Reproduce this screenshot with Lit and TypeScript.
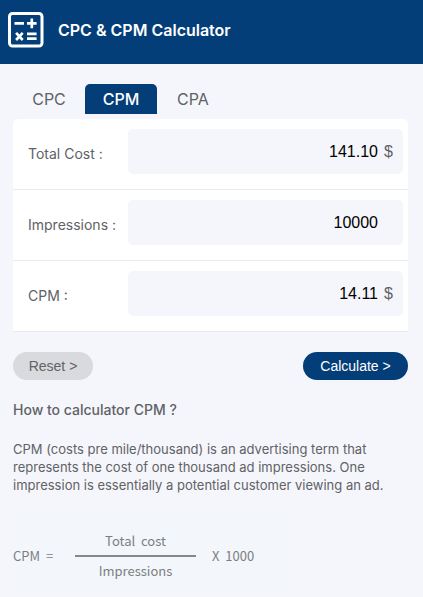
import { LitElement, html, css } from "lit";
import { customElement, state } from "lit/decorators.js";

interface Field {
  id: string;
  label: string;
  value: string;
  unit: string;
}

@customElement("app-root")
export class AppRoot extends LitElement {
  @state() private active = "CPM";

  @state() private fields: Field[] = [
    { id: "cost", label: "Total Cost :", value: "141.10", unit: "$" },
    { id: "impressions", label: "Impressions :", value: "10000", unit: "" },
    { id: "cpm", label: "CPM :", value: "14.11", unit: "$" },
  ];

  static styles = css`
    :host {
      display: block;
      min-height: 100vh;
      background: #f5f6fb;
      color: #606266;
      font-family: Inter, "Liberation Sans", sans-serif;
      font-size: 14px;
    }
    * {
      box-sizing: border-box;
    }
    header {
      display: flex;
      align-items: center;
      gap: 14px;
      height: 64px;
      padding: 0 8px 4px;
      background: #043e78;
      color: #fff;
    }
    .logo {
      width: 36px;
      height: 36px;
    }
    h1 {
      margin: 0;
      font-size: 16px;
      font-weight: 600;
      line-height: 24px;
    }
    main {
      padding: 20px 15px 0 13px;
    }
    .tabs {
      display: flex;
      margin-bottom: 5px;
    }
    .tab {
      width: 72px;
      height: 30px;
      padding: 0;
      border: 0;
      border-radius: 5px 5px 0 0;
      background: none;
      color: inherit;
      font: inherit;
      font-size: 16px;
    }
    .tab.active {
      background: #043e78;
      color: #fff;
      font-weight: 500;
    }
    .card {
      background: #fff;
      border-radius: 5px 5px 0 0;
    }
    .row {
      display: flex;
      align-items: flex-start;
      padding: 10px 5px 10px 15px;
      border-bottom: 1px solid #ebebed;
    }
    .row label {
      flex: none;
      width: 100px;
      line-height: 50px;
    }
    .field {
      display: flex;
      flex: 1;
      min-width: 0;
      height: 45px;
      border-radius: 5px;
      background: #f5f6fb;
    }
    .field input {
      flex: 1;
      min-width: 0;
      padding: 0;
      border: 0;
      outline: 0;
      background: none;
      color: #000;
      font: 16px "Liberation Sans", Arial, sans-serif;
      text-align: right;
    }
    .unit {
      flex: none;
      width: 25px;
      padding-left: 6px;
      font: 16px/45px "Liberation Sans", Arial, sans-serif;
    }
    .actions {
      display: flex;
      justify-content: space-between;
      margin-top: 20px;
    }
    .action {
      height: 28px;
      padding: 0;
      border: 0;
      border-radius: 14px;
      font: 14px "Liberation Sans", Arial, sans-serif;
    }
    .reset {
      width: 80px;
      background: #d9dadd;
      color: #606266;
    }
    .calculate {
      width: 105px;
      background: #043e78;
      color: #fff;
    }
    h2 {
      margin: 20px 0;
      font-size: 14px;
      font-weight: 500;
      line-height: 20px;
    }
    p {
      margin: 0;
      font-size: 13px;
      line-height: 18px;
    }
    .formula {
      display: flex;
      align-items: center;
      width: 268px;
      height: 73px;
      margin-top: 25px;
      background: #f3f6fa;
      color: #7c7e82;
      font: 13px/20px "Noto Sans CJK SC", sans-serif;
      white-space: pre;
    }
    .equals {
      width: 62px;
    }
    .fraction {
      width: 121px;
      margin-right: 16px;
      text-align: center;
    }
    .top {
      padding-bottom: 4px;
      border-bottom: 2px solid #85878a;
    }
    .bottom {
      padding-top: 4px;
    }
  `;

  private setValue(id: string, value: string) {
    this.fields = this.fields.map((f) => (f.id === id ? { ...f, value } : f));
  }

  private reset() {
    this.fields = this.fields.map((f) => ({ ...f, value: "" }));
  }

  private calculate() {
    const [cost, impressions] = this.fields.map((f) => Number(f.value));
    if (impressions > 0) {
      this.setValue("cpm", ((cost / impressions) * 1000).toFixed(2));
    }
  }

  render() {
    return html`
      <header>
        <svg class="logo" viewBox="0 0 36 36" fill="none" stroke="#fff" aria-hidden="true">
          <rect x="1.5" y="1.5" width="32.5" height="32.5" rx="3" stroke-width="3" />
          <path
            d="M6.5 11.3H16M19 11.3h9.6M23.8 6.4v9.8M19 21.8h9.6M19 26.6h9.6M8.1 20.8l6.6 7.2M14.7 20.8l-6.6 7.2"
            stroke-width="2.7"
          />
        </svg>
        <h1>CPC &amp; CPM Calculator</h1>
      </header>
      <main>
        <nav class="tabs">
          ${["CPC", "CPM", "CPA"].map(
            (name) => html`<button
              type="button"
              class="tab ${name === this.active ? "active" : ""}"
              @click=${() => (this.active = name)}
            >
              ${name}
            </button>`
          )}
        </nav>
        <div class="card">
          ${this.fields.map(
            (f) => html`<div class="row">
              <label for=${f.id}>${f.label}</label>
              <div class="field">
                <input
                  id=${f.id}
                  type="text"
                  inputmode="decimal"
                  .value=${f.value}
                  @input=${(e: Event) => this.setValue(f.id, (e.target as HTMLInputElement).value)}
                />
                <span class="unit">${f.unit}</span>
              </div>
            </div>`
          )}
        </div>
        <div class="actions">
          <button type="button" class="action reset" @click=${this.reset}>Reset &gt;</button>
          <button type="button" class="action calculate" @click=${this.calculate}>Calculate &gt;</button>
        </div>
        <h2>How to calculator CPM ?</h2>
        <p>
          CPM (costs pre mile/thousand) is an advertising term that represents the cost of one
          thousand ad impressions. One impression is essentially a potential customer viewing an ad.
        </p>
        <div class="formula"><span class="equals">CPM  =</span><div class="fraction"><div class="top">Total  cost</div><div class="bottom">Impressions</div></div><span>X  1000</span></div>
      </main>
    `;
  }
}
